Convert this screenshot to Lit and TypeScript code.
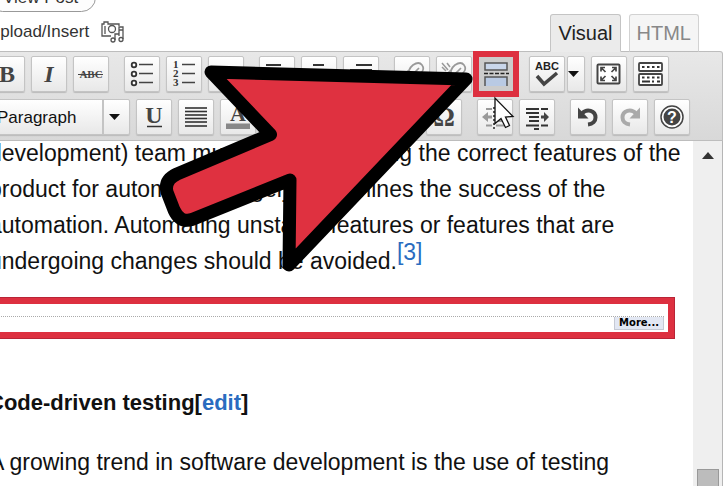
import { LitElement, html, css, svg, nothing } from "lit";
import { customElement } from "lit/decorators.js";

type Tool = { label: string; icon: unknown; menu?: boolean; marked?: boolean };

const lines = (rows: number[][]) =>
  rows.map(([x1, x2, y]) => svg`<path d="M${x1} ${y}H${x2}" stroke="#333" stroke-width="2"/>`);

const glyph = (t: string, size: number, y: number, extra = "") =>
  svg`<text x="18" y=${y} font-size=${size} text-anchor="middle" font-weight="bold"
    font-family="Liberation Serif, serif" fill="#444" font-style=${extra || "normal"}>${t}</text>`;

const chain = svg`<g fill="none" stroke="#999" stroke-width="1.700">
  <path d="M15 19q-1-6 4-10q6-4 9 0t-1 8l-5 6q-3 2-4-1t3-6l4-4"/><path d="M15 14l-5 5q-3 4 0 7t7 0l3-3"/></g>`;

const row1: Tool[][] = [
  [
    { label: "Bold", icon: glyph("B", 24, 26) },
    { label: "Italic", icon: glyph("I", 24, 26, "italic") },
    {
      label: "Strikethrough",
      icon: svg`${glyph("ABC", 11, 22)}<path d="M5 18.500H30" stroke="#444" stroke-width="1"/>`,
    },
  ],
  [
    {
      label: "Bulleted list",
      icon: svg`<g fill="#fff" stroke="#333" stroke-width="1.800"><circle cx="10" cy="9" r="2.300"/><circle cx="10" cy="18" r="2.300"/><circle cx="10" cy="27" r="2.300"/></g>
        <path d="M15 8.500H29M15 17.500H29M15 26.500H29" stroke="#444" stroke-width="1.600"/>`,
    },
    {
      label: "Numbered list",
      icon: svg`<g font-family="Liberation Serif, serif" font-weight="bold" font-size="11" fill="#333"><text x="7" y="12">1</text><text x="7" y="21">2</text><text x="7" y="30">3</text></g>
        <path d="M16 8.500H29M16 17.500H29M16 26.500H29" stroke="#444" stroke-width="1.600"/>`,
    },
    { label: "Blockquote", icon: glyph("“", 40, 44) },
  ],
  [
    { label: "Align left", icon: lines([[7, 22, 9], [7, 29, 14], [7, 20, 18], [7, 29, 22], [7, 22, 26]]) },
    { label: "Align center", icon: lines([[12, 23, 9], [7, 29, 14], [12, 23, 18], [7, 29, 22], [12, 23, 26]]) },
    { label: "Align right", icon: lines([[13, 29, 9], [7, 29, 14], [15, 29, 18], [7, 29, 22], [13, 29, 26]]) },
  ],
  [
    { label: "Insert link", icon: chain },
    { label: "Unlink", icon: svg`${chain}<path d="M6 7l6 7M11 7l3 4M6 11l4 4" stroke="#999" stroke-width="1.500"/>` },
    {
      label: "Insert More tag",
      marked: true,
      icon: svg`<rect x="7" y="7" width="22" height="7" fill="#c9d6ea" stroke="#555" stroke-width="1.500"/>
        <path d="M6 17.500H31" stroke="#222" stroke-width="1.500" stroke-dasharray="4 1.500"/>
        <path d="M7 30V21H29V30" fill="#b9cae4" stroke="#555" stroke-width="1.500"/>`,
    },
  ],
  [
    {
      label: "Spellcheck",
      menu: true,
      icon: svg`<text x="18" y="14" text-anchor="middle" font-family="Liberation Sans, sans-serif" font-weight="bold" font-size="11" fill="#222">ABC</text>
        <path d="M8 20l7 8L28 17" fill="none" stroke="#444" stroke-width="3.500"/>`,
    },
    {
      label: "Fullscreen",
      icon: svg`<rect x="6.500" y="8.500" width="22" height="19" rx="1" fill="#fff" stroke="#444" stroke-width="2"/>
        <path d="M10 15.500v-4h4M21 11.500h4V15.500M10 20.500v4h4M21 24.500h4V20.500M10.500 12l4 4M24.500 12l-4 4M10.500 24l4-4M24.500 24l-4-4" fill="none" stroke="#444" stroke-width="1.700"/>`,
    },
    {
      label: "Kitchen sink",
      icon: svg`<g fill="#fff" stroke="#444" stroke-width="1.800"><rect x="6" y="7" width="23" height="8" rx="1"/><rect x="6" y="18" width="23" height="11" rx="1"/></g>
        <g stroke="#333" stroke-width="2"><path d="M9 11H27M9 21.500H27" stroke-dasharray="2.500 2.500"/><path d="M9 25.500H17M19 25.500H21M24 25.500H27"/></g>`,
    },
  ],
];

const turn = (c: string, flip = false) => svg`<g transform=${flip ? "translate(36 0) scale(-1 1)" : ""}>
  <path d="M12 14.500C17 9 25.500 11.500 25.500 18.500C25.500 22 23 25 18 25.500" fill="none" stroke=${c} stroke-width="4"/>
  <path d="M8 8.500V19.500H18.500z" fill=${c}/></g>`;

const row2: Tool[][] = [
  [
    { label: "Underline", icon: svg`${glyph("U", 24, 24)}<path d="M11 27.500H26" stroke="#333" stroke-width="1.500"/>` },
    { label: "Justify", icon: [9, 12.5, 16, 19.5, 23, 27].map((y) => svg`<path d="M7 ${y}H29" stroke="#333" stroke-width="1.600"/>`) },
    { label: "Text color", menu: true, icon: svg`${glyph("A", 22, 22)}<rect x="6" y="24.500" width="24" height="5.500" fill="#888"/>` },
  ],
  [
    { label: "Paste as text", icon: glyph("T", 22, 25) },
    { label: "Paste from Word", icon: glyph("W", 22, 25) },
    { label: "Remove formatting", icon: svg`<path d="M7 24l12-12 9 4-12 12z" fill="#777"/>` },
  ],
  [{ label: "Special character", icon: glyph("Ω", 27, 27) }],
  [
    {
      label: "Outdent",
      icon: svg`<path d="M9 10H15M9 26.500H15M19 10H29M19 14H29M19 22H29M19 26.500H29" stroke="#999" stroke-width="1.800"/><path d="M17 8V30" stroke="#555" stroke-width="2" stroke-dasharray="2 2"/><path d="M5 18l6-5v3.500h4v3h-4V23z" fill="#999"/>`,
    },
    {
      label: "Indent",
      icon: svg`<path d="M7 10H20M7 14H20M10 18H20M10 22H20M7 26.500H20M22 10H29M22 26.500H29M15 30H20" stroke="#333" stroke-width="2"/><path d="M30 18l-5-5v3.500h-3v3h3V23z" fill="#444"/>`,
    },
  ],
  [
    { label: "Undo", icon: turn("#444") },
    { label: "Redo", icon: turn("#aaa", true) },
    {
      label: "Help",
      icon: svg`<circle cx="18" cy="18" r="11" fill="#fff" stroke="#444" stroke-width="1.500"/><circle cx="18" cy="18" r="8.500" fill="#444"/>
        <text x="18" y="24" text-anchor="middle" font-family="Liberation Sans, sans-serif" font-weight="bold" font-size="16" fill="#fff">?</text>`,
    },
  ],
];

@customElement("app-root")
export class AppRoot extends LitElement {
  static styles = css`
    :host {
      display: flex;
      flex-direction: column;
      position: relative;
      height: 100vh;
      overflow: hidden;
      background: #fff;
      color: #111;
      font-family: "Liberation Sans", Arial, sans-serif;
    }
    * { box-sizing: border-box; }
    button, select { font: inherit; color: inherit; margin: 0; padding: 0; }
    .header { display: flex; justify-content: space-between; align-items: flex-end; padding-right: 29px; }
    .left { margin: -17px 0 0 -12px; font-size: 17px; color: #333; }
    .view {
      display: block; height: 29px; padding: 0 17px 0 14px; margin-bottom: 1px;
      border: 1px solid #999; border-radius: 15px; background: #fdfdfd;
    }
    .media { display: flex; align-items: center; gap: 12px; height: 38px; }
    .media svg { width: 25px; height: 22px; }
    .tabs { display: flex; gap: 8px; position: relative; margin-bottom: -1px; }
    .tab {
      height: 38px; padding: 0 7px; font-size: 20px; color: #888;
      border: 1px solid #d2d2d2; border-bottom-color: #bbb; border-radius: 3px 3px 0 0; background: #f5f5f5;
    }
    .tab.on { color: #222; background: #ebebeb; border-color: #c4c4c4; border-bottom-color: #ebebeb; }
    .toolbar {
      display: flex; flex-direction: column; gap: 7px; flex: none;
      margin-right: 5px; padding: 4px 0 5px;
      border: solid #bdbdbd; border-width: 1px 1px 1px 0; border-radius: 0 3px 0 0;
      background: linear-gradient(#e8e8e8, #d8d8d8);
    }
    .row { display: flex; gap: 15px; margin-left: -11px; }
    .row.second { margin-left: -22px; }
    .group { display: flex; gap: 6px; }
    .split { display: flex; gap: 2px; }
    .tool {
      width: 36px; height: 36px; border: 1px solid #c4c4c4; border-radius: 2px;
      background: linear-gradient(#fff, #e8e8e8); box-shadow: 0 1px 1px #bbb;
    }
    .tool svg { display: block; width: 36px; height: 36px; margin: -1px; }
    .tool.menu { width: 18px; }
    .tool.menu svg { width: 18px; }
    .tool.marked { background: #ccc; border-color: #eee; border-radius: 0; outline: 6px solid #dd3040; outline-offset: -1px; box-shadow: none; }
    .format { display: grid; width: 152px; }
    .format > * { grid-area: 1 / 1; }
    .format select {
      appearance: none; width: 100%; height: 36px; padding-left: 18px; font-size: 17px;
      border: 1px solid #c4c4c4; border-radius: 2px; background: linear-gradient(#fff, #e8e8e8);
      box-shadow: 0 1px 1px #bbb;
    }
    .format svg { justify-self: end; width: 28px; height: 36px; pointer-events: none; }
    .editor { display: flex; flex: 1; min-height: 0; margin-right: 5px; border-right: 1px solid #b5b5b5; }
    .content { flex: 1; min-width: 0; overflow: hidden; font-size: 23px; line-height: 36px; }
    p { margin: 0 8px 0 -11px; }
    .first { margin-top: -6px; }
    a { color: #2a6cc0; text-decoration: none; }
    sup { font-size: 23px; line-height: 0; vertical-align: 9px; }
    .more {
      display: flex; height: 42px; margin: 18px 18px 46px -12px;
      padding: 12px 4px 0 0; border: 7px solid #dd3040;
      outline: 1px solid #b92436; outline-offset: -1px;
    }
    .more div { flex: 1; display: flex; justify-content: flex-end; border-top: 1px dotted #aaa; }
    .more span {
      height: 13px; padding: 0 4px; border: 1px solid #c5c9d4; border-top: 0; background: #e2e7f3;
      font: bold 10px/12px "DejaVu Sans", sans-serif; color: #000;
    }
    h2 { margin: 0 0 23px -12px; font-size: 22px; line-height: 36px; }
    .bar { display: flex; flex-direction: column; justify-content: space-between; align-items: center; width: 29px; padding-top: 11px; background: #efefef; }
    .bar svg { width: 12px; height: 7px; }
    .thumb { width: 22px; height: 17px; background: #bcbcbc; border: 1px solid #999; border-bottom: 0; }
    .pointer { position: absolute; left: 0; top: 0; width: 728px; height: 486px; pointer-events: none; }
  `;

  private tool(t: Tool) {
    const button = html`<button class="tool ${t.marked ? "marked" : ""}" aria-label=${t.label}>
      <svg viewBox="0 0 36 36">${t.icon}</svg>
    </button>`;
    return t.menu
      ? html`<div class="split">${button}<button class="tool menu" aria-label="${t.label} options">
          <svg viewBox="0 0 18 36"><path d="M1 15H12L6.500 21z" fill="#111"/></svg></button></div>`
      : button;
  }

  private groups(row: Tool[][], lead: unknown = nothing) {
    return row.map((g, i) => html`<div class="group">${i === 0 ? lead : nothing}${g.map((t) => this.tool(t))}</div>`);
  }

  render() {
    const format = html`<div class="format">
      <select aria-label="Format"><option>Paragraph</option><option>Heading 2</option></select>
      <svg viewBox="0 0 28 36"><path d="M1 1V35" stroke="#c4c4c4" stroke-width="2"/><path d="M7 15H18L12.500 21z" fill="#111"/></svg>
    </div>`;
    return html`
      <div class="header">
        <div class="left">
          <button class="view">View Post</button>
          <div class="media">
            <span>Upload/Insert</span>
            <svg viewBox="0 0 25 22" fill="none" stroke="#555" stroke-width="1.300">
              <path d="M10 15H1V3H3V1H7V3H18V5"/><circle cx="11" cy="8" r="3.500"/><path d="M4 5V13"/>
              <path d="M14 19V13H18M22 18V6H18V15M18 9H22"/><circle cx="12" cy="19" r="2"/><circle cx="20" cy="18.500" r="2"/>
            </svg>
          </div>
        </div>
        <div class="tabs">
          <button class="tab on">Visual</button>
          <button class="tab">HTML</button>
        </div>
      </div>
      <div class="toolbar">
        <div class="row">${this.groups(row1)}</div>
        <div class="row second">${this.groups(row2, format)}</div>
      </div>
      <div class="editor">
        <div class="content">
          <p class="first">development) team must make. Selecting the correct features of the product for automation largely determines the success of the automation. Automating unstable features or features that are undergoing changes should be avoided.<sup><a href="#cite3">[3]</a></sup></p>
          <div class="more"><div><span>More...</span></div></div>
          <h2>Code-driven testing[<a href="#edit">edit</a>]</h2>
          <p>A growing trend in software development is the use of testing</p>
        </div>
        <div class="bar">
          <svg viewBox="0 0 12 7"><path d="M0 7L6 0L12 7z" fill="#333"/></svg>
          <div class="thumb"></div>
        </div>
      </div>
      <svg class="pointer" viewBox="0 0 728 486">
        <path d="M211 72L466 79L289 265L290 180L192 219.500Q180 223 174 210L167 192Q164 180 177 174L270.500 134.500Z"
          fill="#df3140" stroke="#000" stroke-width="13" stroke-linejoin="round"/>
        <path d="M495 98V123.500L501 118.500L505.500 127.500L509.500 125.500L505.500 117L513 116.500Z" fill="#fff" stroke="#111" stroke-width="1.300"/>
      </svg>
    `;
  }
}
